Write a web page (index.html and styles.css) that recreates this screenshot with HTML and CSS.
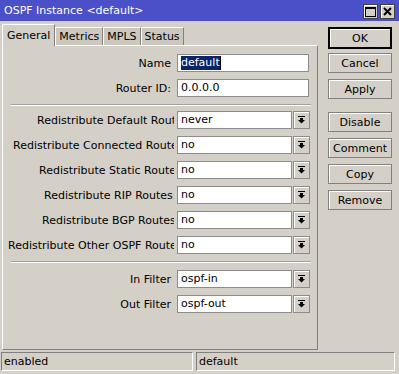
FILE: index.html
```html
<!DOCTYPE html>
<html lang="en">
<head>
  <meta charset="UTF-8">
  <title>OSPF Instance &lt;default&gt;</title>
  <link rel="stylesheet" href="styles.css">
</head>
<body>
  <div class="window">
    <div class="titlebar">
      <span class="title">OSPF Instance &lt;default&gt;</span>
      <div class="win-buttons">
        <span class="win-btn">
          <svg width="11" height="10" viewBox="0 0 11 10"><rect x="0.5" y="0.5" width="10" height="9" fill="none" stroke="#000"/><rect x="0" y="0" width="11" height="2" fill="#000"/></svg>
        </span>
        <span class="win-btn">
          <svg width="9" height="9" viewBox="0 0 9 9"><path d="M1 1 L8 8 M8 1 L1 8" stroke="#000" stroke-width="2"/></svg>
        </span>
      </div>
    </div>

    <div class="content">
      <div class="main">
        <div class="tabs">
          <span class="tab active">General</span>
          <span class="tab">Metrics</span>
          <span class="tab">MPLS</span>
          <span class="tab">Status</span>
        </div>
        <div class="panel">
          <div class="row">
            <label class="label">Name</label>
            <div class="field"><span class="selected">default</span><span class="caret"></span></div>
          </div>
          <div class="row">
            <label class="label">Router ID:</label>
            <div class="field">0.0.0.0</div>
          </div>

          <div class="separator"></div>

          <div class="row">
            <label class="label long indent-29">Redistribute Default Route:</label>
            <div class="field select">never</div>
            <span class="drop"></span>
          </div>
          <div class="row">
            <label class="label long indent-5">Redistribute Connected Route:</label>
            <div class="field select">no</div>
            <span class="drop"></span>
          </div>
          <div class="row">
            <label class="label long indent-31">Redistribute Static Route:</label>
            <div class="field select">no</div>
            <span class="drop"></span>
          </div>
          <div class="row">
            <label class="label long indent-36">Redistribute RIP Routes:</label>
            <div class="field select">no</div>
            <span class="drop"></span>
          </div>
          <div class="row">
            <label class="label long indent-34">Redistribute BGP Routes:</label>
            <div class="field select">no</div>
            <span class="drop"></span>
          </div>
          <div class="row">
            <label class="label long">Redistribute Other OSPF Routes:</label>
            <div class="field select">no</div>
            <span class="drop"></span>
          </div>

          <div class="separator tight"></div>

          <div class="row">
            <label class="label">In Filter</label>
            <div class="field select">ospf-in</div>
            <span class="drop"></span>
          </div>
          <div class="row">
            <label class="label">Out Filter</label>
            <div class="field select">ospf-out</div>
            <span class="drop"></span>
          </div>
        </div>
      </div>

      <div class="actions">
        <button class="btn default">OK</button>
        <button class="btn">Cancel</button>
        <button class="btn group-end">Apply</button>
        <button class="btn">Disable</button>
        <button class="btn">Comment</button>
        <button class="btn">Copy</button>
        <button class="btn">Remove</button>
      </div>
    </div>

    <div class="statusbar">
      <div class="status-cell first">enabled</div>
      <div class="status-cell">default</div>
    </div>
  </div>
</body>
</html>
```

FILE: styles.css
```css
body {
  margin: 0;
  padding: 0;
  background-color: #d4d0c8;
  font-family: "DejaVu Sans", Verdana, sans-serif;
  font-size: 11px;
  color: #000;
}

.window {
  width: 399px;
  height: 374px;
  display: flex;
  flex-direction: column;
  overflow: hidden;
}

.titlebar {
  height: 21px;
  background-color: #4b50c9;
  display: flex;
  align-items: center;
  justify-content: space-between;
  padding: 0 4px 0 4px;
  box-sizing: border-box;
}

.title {
  color: #fff;
  font-size: 11px;
}

.win-buttons {
  display: flex;
  gap: 2px;
  padding-top: 2px;
}

.win-btn {
  width: 15px;
  height: 15px;
  box-sizing: border-box;
  background-color: #d4d0c8;
  border: 1px solid #404040;
  box-shadow: inset 1px 1px #fff;
  display: flex;
  align-items: center;
  justify-content: center;
}

.content {
  display: flex;
  height: 329px;
}

.main {
  width: 316px;
  margin-left: 2px;
  display: flex;
  flex-direction: column;
}

.tabs {
  display: flex;
  align-items: flex-end;
  height: 24px;
}

.tab {
  height: 18px;
  line-height: 17px;
  padding: 0 3px;
  box-sizing: border-box;
  border-top: 1px solid #fff;
  border-left: 1px solid #fff;
  border-right: 1px solid #808080;
  background-color: #ccc8c0;
}

.tab.active {
  height: 22px;
  line-height: 21px;
  background-color: #d4d0c8;
  padding: 0 4px;
  margin-bottom: -1px;
  position: relative;
  z-index: 1;
}

.panel {
  flex: 1;
  border-top: 1px solid #fff;
  border-left: 1px solid #fff;
  border-right: 1px solid #808080;
  border-bottom: 1px solid #808080;
  padding: 8px 0 0 5px;
}

.row {
  display: flex;
  align-items: center;
  height: 18px;
  margin-bottom: 7px;
}

.label {
  width: 163px;
  padding-right: 1px;
  margin-right: 5px;
  text-align: right;
  white-space: nowrap;
  overflow: hidden;
}

/* long labels are cut by the field, like the original dialog */
.label.long {
  text-align: left;
  padding-right: 0;
  width: 166px;
  margin-right: 3px;
}

.indent-5 { text-indent: 5px; }
.indent-29 { text-indent: 29px; }
.indent-31 { text-indent: 31px; }
.indent-34 { text-indent: 34px; }
.indent-36 { text-indent: 36px; }

.field {
  width: 132px;
  height: 18px;
  box-sizing: border-box;
  background-color: #fff;
  border: 1px solid #8c8c8c;
  padding-left: 3px;
  line-height: 16px;
  white-space: nowrap;
  display: flex;
  align-items: center;
}

.field.select {
  width: 115px;
}

.selected {
  background-color: #0a246a;
  color: #fff;
  line-height: 14px;
}

.caret {
  width: 1px;
  height: 14px;
  background-color: #000;
}

.drop {
  width: 17px;
  height: 18px;
  margin-left: 1px;
  box-sizing: border-box;
  border: 1px solid #8c8c8c;
  box-shadow: inset 1px 1px #fff;
  background-color: #d4d0c8;
  background-image: url("data:image/svg+xml;utf8,<svg xmlns='http://www.w3.org/2000/svg' width='7' height='8'><rect x='0' y='0' width='7' height='1' fill='black'/><rect x='2' y='2' width='3' height='2' fill='black'/><path d='M0 4 L7 4 L3.5 7.5 Z' fill='black'/></svg>");
  background-repeat: no-repeat;
  background-position: center;
}

.separator {
  height: 0;
  margin: 3px 6px 5px 3px;
  border-top: 1px solid #a0a0a0;
  border-bottom: 1px solid #fff;
}

.separator.tight {
  margin-top: 1px;
  margin-bottom: 7px;
}

.actions {
  display: flex;
  flex-direction: column;
  margin-left: 10px;
  padding-top: 6px;
}

.btn {
  width: 64px;
  height: 20px;
  margin-bottom: 6px;
  padding: 0;
  font-family: "DejaVu Sans", Verdana, sans-serif;
  font-size: 11px;
  color: #000;
  background-color: #d4d0c8;
  border: 1px solid #808080;
  box-shadow: inset 1px 1px #fff;
  cursor: pointer;
}

.btn.default {
  height: 22px;
  border: 2px solid #000;
  margin-bottom: 4px;
}

.btn.group-end {
  margin-bottom: 13px;
}

.statusbar {
  display: flex;
  gap: 3px;
  padding: 2px 4px 0 1px;
}

.status-cell {
  flex: 1;
  height: 19px;
  box-sizing: border-box;
  border-top: 1px solid #808080;
  border-left: 1px solid #808080;
  border-right: 1px solid #fff;
  border-bottom: 1px solid #fff;
  padding-left: 2px;
  line-height: 17px;
}

.status-cell.first {
  flex: 0 0 192px;
}
```
